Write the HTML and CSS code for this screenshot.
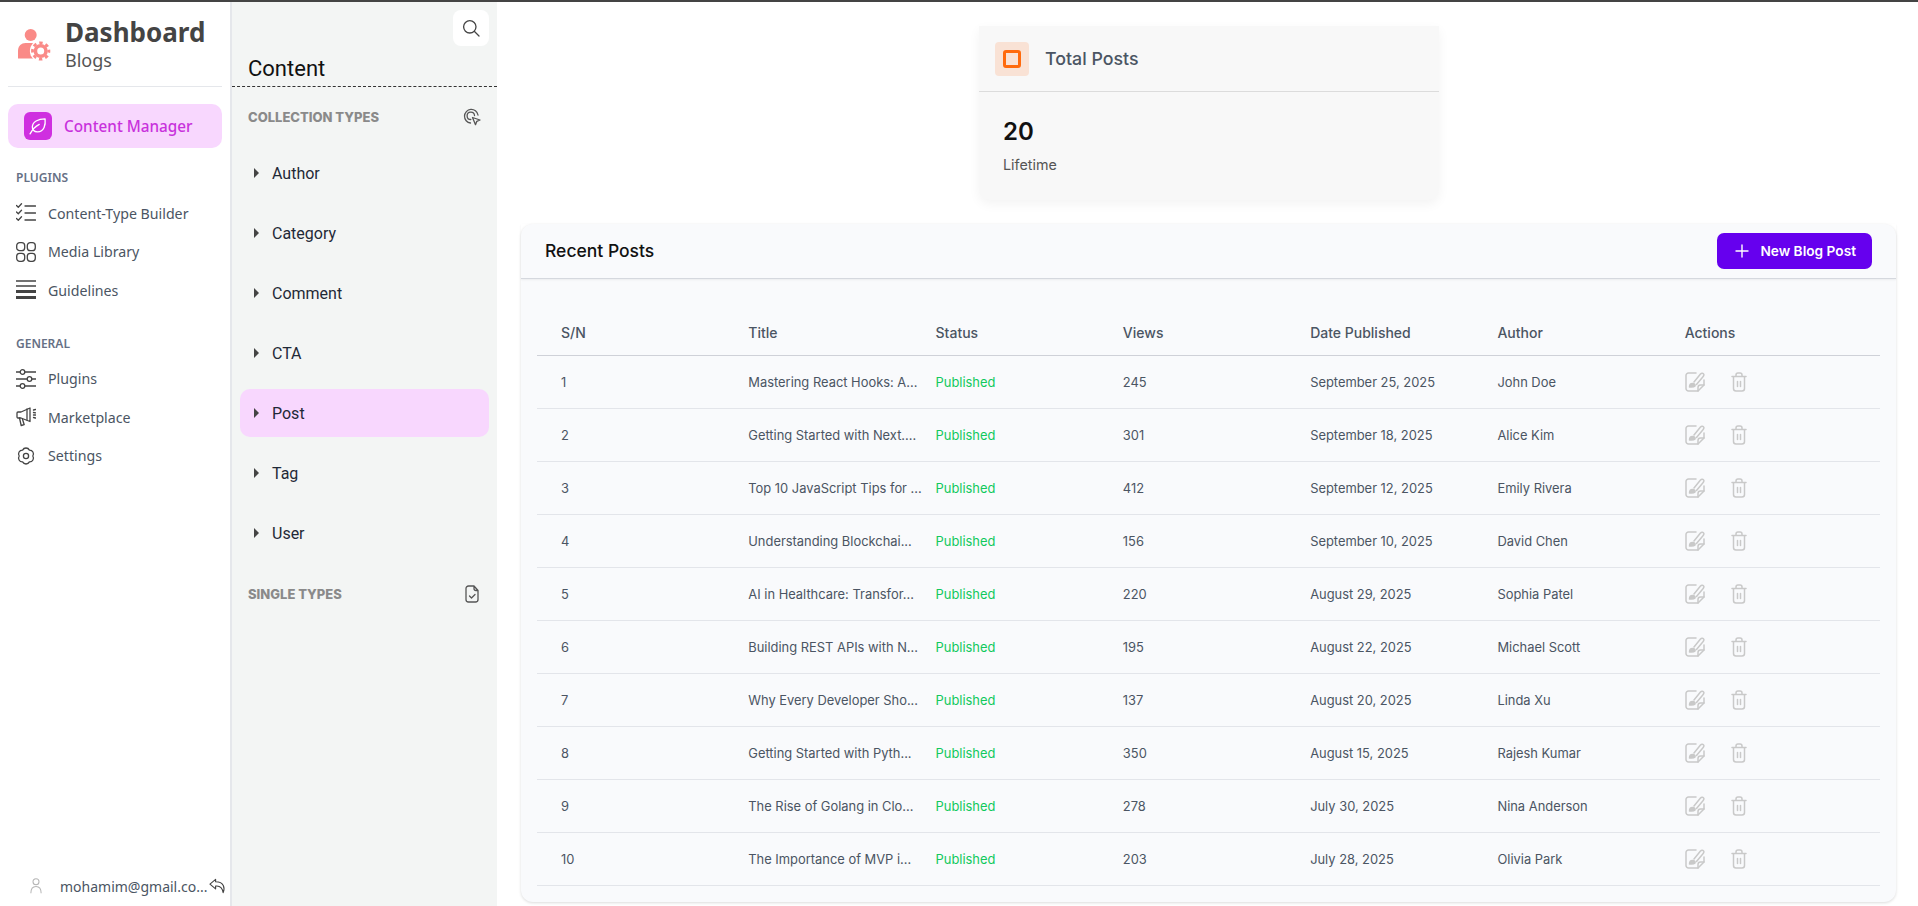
FILE: index.html
```html
<!DOCTYPE html>
<html lang="en">
<head>
    <meta charset="UTF-8">
    <meta name="viewport" content="width=device-width, initial-scale=1.0">
    <title>Dashboard Blogs</title>
    <link rel="stylesheet" href="styles.css">
</head>
<body>
    <div class="app">
        <!-- Main navigation -->
        <aside class="sidebar">
            <div class="brand">
                <svg class="brand-icon" viewBox="0 0 33 32" fill="#fa8a87">
                    <circle cx="12.700" cy="6" r="6"/>
                    <path d="M0 29.500v-8c0-4.500 3.500-7.500 7.500-7.500h10c3 0 5 1 6 3v12.500z"/>
                    <circle cx="22.700" cy="22" r="10.800" fill="#fff"/>
                    <circle cx="22.700" cy="22" r="5.300" fill="none" stroke="#fa8a87" stroke-width="3.600"/>
                    <circle cx="22.700" cy="22" r="8.200" fill="none" stroke="#fa8a87" stroke-width="2.800" stroke-dasharray="3.400 3.040" stroke-dashoffset="1.700"/>
                </svg>
                <div>
                    <div class="brand-title">Dashboard</div>
                    <div class="brand-sub">Blogs</div>
                </div>
            </div>

            <a class="manager-link">
                <span class="manager-icon">
                    <svg width="20" height="20" viewBox="0 0 24 24" fill="none" stroke="#fff" stroke-width="1.600" stroke-linecap="round" stroke-linejoin="round">
                        <path d="M20.500 3.500c.8 7-1 15-9 15.500-4 .2-6.500-2.500-6.300-6C5.500 7 12 3.500 20.500 3.500z"/>
                        <path d="M2.500 21.500c2.500-5 6-9 11-11.500"/>
                    </svg>
                </span>
                Content Manager
            </a>

            <div class="nav-label">PLUGINS</div>
            <a class="nav-item">
                <svg class="nav-icon" viewBox="0 0 20 20"><path d="M.5 2.500l1.800 1.800L5.500.8M.5 9l1.800 1.800L5.500 7.300M.5 15.500l1.800 1.800 3.200-3.500M9 3h10.500M9 10h10.500M9 17h10.500"/></svg>
                Content-Type Builder
            </a>
            <a class="nav-item">
                <svg class="nav-icon" viewBox="0 0 20 20"><rect x=".7" y=".7" width="8" height="8" rx="3"/><rect x="11.300" y=".7" width="8" height="8" rx="3"/><rect x=".7" y="11.300" width="8" height="8" rx="3"/><rect x="11.300" y="11.300" width="8" height="8" rx="3"/></svg>
                Media Library
            </a>
            <a class="nav-item">
                <svg class="nav-icon" viewBox="0 0 20 20"><path d="M0 1h20M0 6h20"/><path d="M0 11.500h20M0 17.500h20" stroke-width="3"/></svg>
                Guidelines
            </a>

            <div class="nav-label nav-label-general">GENERAL</div>
            <a class="nav-item">
                <svg class="nav-icon" viewBox="0 0 20 20"><path d="M0 3h4M9 3h11M0 10h11M16 10h4M0 17h4M9 17h11"/><circle cx="6.500" cy="3" r="2.300"/><circle cx="13.500" cy="10" r="2.300"/><circle cx="6.500" cy="17" r="2.300"/></svg>
                Plugins
            </a>
            <a class="nav-item">
                <svg class="nav-icon" viewBox="0 0 20 20"><path d="M14 1v13.500L5 11H1.800A1 1 0 0 1 1 10V6a1 1 0 0 1 1-1h3z"/><path d="M3.500 11l1.700 7.500 3-.8-1.700-5.500M11 2v11M17.500 3l2-.5M17.500 8h2M17.500 5.500l2 .3M17.500 10.500l2 .5"/></svg>
                Marketplace
            </a>
            <a class="nav-item">
                <svg class="nav-icon" viewBox="0 0 20 20"><path d="M13.400 4.100A3.800 3.800 0 0 1 16.800 10 3.800 3.800 0 0 1 13.400 15.900 3.800 3.800 0 0 1 6.600 15.900 3.800 3.800 0 0 1 3.200 10 3.800 3.800 0 0 1 6.600 4.100 3.800 3.800 0 0 1 13.400 4.100z"/><circle cx="10" cy="10" r="2.600"/></svg>
                Settings
            </a>

            <div class="user-row">
                <svg class="user-icon" viewBox="0 0 14 20"><circle cx="7" cy="4.500" r="3.500"/><path d="M1 18c0-5 2.500-8 6-8s6 3 6 8"/></svg>
                <span class="user-mail">mohamim@gmail.co...</span>
                <svg class="user-back" viewBox="0 0 18 18"><path d="M7 1.500L1 6.500l6 5V8.500c4-.5 7 1 8 7 2-5 1-11.500-8-11.500z"/></svg>
            </div>
        </aside>

        <!-- Content types -->
        <nav class="content-panel">
            <div class="search-row">
                <button class="search-btn">
                    <svg width="18" height="18" viewBox="0 0 18 18" fill="none" stroke="#444" stroke-width="1.300" stroke-linecap="round"><circle cx="7.800" cy="7.800" r="6.200"/><path d="M12.500 12.500l4.500 4.500"/></svg>
                </button>
            </div>
            <div class="panel-title">Content</div>

            <div class="type-head">
                <span>COLLECTION TYPES</span>
                <svg width="18" height="18" viewBox="0 0 18 18" fill="none" stroke="#555" stroke-width="1.300" stroke-linecap="round" stroke-linejoin="round"><path d="M7.500 15A6.800 6.800 0 1 1 15 7M7.800 11.500A3.700 3.700 0 1 1 11.500 7.500"/><path d="M9.500 9.500l7.500 2.500-3.200 1.300-1.300 3.400z"/></svg>
            </div>
            <ul class="type-list">
                <li class="type-item"><span class="caret"></span>Author</li>
                <li class="type-item"><span class="caret"></span>Category</li>
                <li class="type-item"><span class="caret"></span>Comment</li>
                <li class="type-item"><span class="caret"></span>CTA</li>
                <li class="type-item active"><span class="caret"></span>Post</li>
                <li class="type-item"><span class="caret"></span>Tag</li>
                <li class="type-item"><span class="caret"></span>User</li>
            </ul>
            <div class="type-head type-head-single">
                <span>SINGLE TYPES</span>
                <svg width="18" height="18" viewBox="0 0 18 18" fill="none" stroke="#555" stroke-width="1.300" stroke-linecap="round" stroke-linejoin="round"><path d="M3 3.500A2.500 2.500 0 0 1 5.500 1h5.500l4 4.500v9a2.500 2.500 0 0 1-2.500 2.500h-7A2.500 2.500 0 0 1 3 14.500zM11 1v2.500a2 2 0 0 0 2 2h2M6.500 11l2 2 3.500-3.500"/></svg>
            </div>
        </nav>

        <main class="main">
            <section class="stat-card">
                <div class="stat-head">
                    <span class="stat-icon"><span class="stat-square"></span></span>
                    Total Posts
                </div>
                <div class="stat-body">
                    <div class="stat-value">20</div>
                    <div class="stat-note">Lifetime</div>
                </div>
            </section>

            <section class="posts">
                <div class="posts-head">
                    <h2>Recent Posts</h2>
                    <button class="new-btn">
                        <svg width="14" height="14" viewBox="0 0 14 14" stroke="#fff" stroke-width="1.400" stroke-linecap="round"><path d="M7 1v12M1 7h12"/></svg>
                        New Blog Post
                    </button>
                </div>
                <div class="table" id="table">
                    <div class="row row-head">
                        <div>S/N</div><div>Title</div><div>Status</div><div>Views</div><div>Date Published</div><div>Author</div><div>Actions</div>
                    </div>
                </div>
            </section>
        </main>
    </div>

    <script>
        const posts = [
            ['Mastering React Hooks: A...', 245, 'September 25, 2025', 'John Doe'],
            ['Getting Started with Next....', 301, 'September 18, 2025', 'Alice Kim'],
            ['Top 10 JavaScript Tips for ...', 412, 'September 12, 2025', 'Emily Rivera'],
            ['Understanding Blockchai...', 156, 'September 10, 2025', 'David Chen'],
            ['AI in Healthcare: Transfor...', 220, 'August 29, 2025', 'Sophia Patel'],
            ['Building REST APIs with N...', 195, 'August 22, 2025', 'Michael Scott'],
            ['Why Every Developer Sho...', 137, 'August 20, 2025', 'Linda Xu'],
            ['Getting Started with Pyth...', 350, 'August 15, 2025', 'Rajesh Kumar'],
            ['The Rise of Golang in Clo...', 278, 'July 30, 2025', 'Nina Anderson'],
            ['The Importance of MVP i...', 203, 'July 28, 2025', 'Olivia Park']
        ];

        const editIcon = '<svg width="20" height="20" viewBox="0 0 20 20" fill="none" stroke="#c9c9c9" stroke-width="1.500" stroke-linecap="round" stroke-linejoin="round"><path d="M11 1H3.500A2.500 2.500 0 0 0 1 3.500v13A2.500 2.500 0 0 0 3.500 19H13l6-6V8"/><path d="M13 19v-3.500a2.500 2.500 0 0 1 2.500-2.500H19"/><path d="M9 10l6.500-8c1-1 2.800-.8 3.300.3.400 1-.2 1.700-.8 2.400L11.500 12.500"/><path d="M4.500 15c0-2 1-3.500 3-3.500s3 1.300 2.500 2.500c-1 1.200-3.500 1.200-5.500 1z" fill="#c9c9c9"/></svg>';
        const trashIcon = '<svg width="16" height="20" viewBox="0 0 16 20" fill="none" stroke="#c9c9c9" stroke-width="1.500" stroke-linecap="round" stroke-linejoin="round"><path d="M1 4.500h14M5 4.500V3a2 2 0 0 1 2-2h2a2 2 0 0 1 2 2v1.500M2.500 4.500v12A2.500 2.500 0 0 0 5 19h6a2.500 2.500 0 0 0 2.500-2.500v-12M6.500 9.500v5M9.500 9.500v5"/></svg>';

        const table = document.getElementById('table');
        posts.forEach(function (post, i) {
            const row = document.createElement('div');
            row.className = 'row';
            row.innerHTML =
                `<div>${i + 1}</div>` +
                `<div>${post[0]}</div>` +
                `<div class="cell-status">Published</div>` +
                `<div>${post[1]}</div>` +
                `<div>${post[2]}</div>` +
                `<div>${post[3]}</div>` +
                `<div class="cell-actions">${editIcon}${trashIcon}</div>`;
            table.appendChild(row);
        });
    </script>
</body>
</html>
```

FILE: styles.css
```css
* {
    box-sizing: border-box;
}

html, body {
    margin: 0;
    height: 100%;
    overflow: hidden;
}

body {
    font-family: 'Noto Sans', sans-serif;
    background-color: #ffffff;
    color: #444;
}

.app {
    display: flex;
    height: 906px;
    border-top: 2px solid #444;
}

/* Sidebar */
.sidebar {
    width: 232px;
    flex-shrink: 0;
    display: flex;
    flex-direction: column;
    padding: 0 8px;
    border-right: 2px solid #e5e7eb;
    position: relative;
}

.brand {
    display: flex;
    align-items: center;
    gap: 14px;
    height: 85px;
    padding: 0 0 2px 10px;
    border-bottom: 1px solid #e5e7eb;
}

.brand-icon {
    width: 33px;
    height: 32px;
    flex-shrink: 0;
    margin-top: 3px;
}

.brand-title {
    font-size: 26px;
    font-weight: 700;
    line-height: 34px;
    color: #444;
}

.brand-sub {
    font-size: 18px;
    line-height: 22px;
    color: #555;
}

.manager-link {
    display: flex;
    align-items: center;
    gap: 12px;
    height: 44px;
    margin-top: 17px;
    padding-left: 16px;
    border-radius: 10px;
    background-color: #f8d7fe;
    color: #c832dc;
    font-size: 15.300px;
    font-weight: 500;
}

.manager-icon {
    width: 28px;
    height: 28px;
    display: flex;
    align-items: center;
    justify-content: center;
    border-radius: 6px;
    background-color: #cf2fe0;
}

.nav-label {
    margin: 22px 0 0 8px;
    height: 16px;
    line-height: 16px;
    font-size: 12px;
    font-weight: 600;
    color: #667085;
}

.nav-label-general {
    margin-top: 26px;
}

.nav-item {
    display: flex;
    align-items: center;
    gap: 12px;
    height: 38.500px;
    padding-left: 8px;
    font-size: 14.200px;
    color: #4b5563;
}

.nav-label + .nav-item {
    margin-top: 8px;
}

.nav-label-general + .nav-item {
    margin-top: 8px;
}

.nav-icon {
    width: 20px;
    height: 20px;
    flex-shrink: 0;
    fill: none;
    stroke: #444;
    stroke-width: 1.300;
    stroke-linecap: round;
    stroke-linejoin: round;
}

.user-row {
    position: absolute;
    left: 30px;
    right: 4px;
    bottom: 10px;
    display: flex;
    align-items: center;
    gap: 18px;
    font-size: 14px;
    color: #4b5563;
}

.user-icon {
    width: 12px;
    height: 19px;
    flex-shrink: 0;
    fill: none;
    stroke: #b5b5b5;
    stroke-width: 1.200;
}

.user-mail {
    flex: 1;
    white-space: nowrap;
}

.user-back {
    width: 17px;
    height: 17px;
    flex-shrink: 0;
    margin-left: -16px;
    fill: none;
    stroke: #444;
    stroke-width: 1.200;
    stroke-linejoin: round;
}

/* Content panel */
.content-panel {
    width: 265px;
    flex-shrink: 0;
    padding: 0 8px;
    background-color: #f3f5f4;
}

.search-row {
    display: flex;
    justify-content: flex-end;
    padding-top: 8px;
}

.search-btn {
    width: 36px;
    height: 36px;
    display: flex;
    align-items: center;
    justify-content: center;
    padding: 0;
    border: none;
    border-radius: 8px;
    background-color: #ffffff;
}

.panel-title {
    height: 41px;
    margin: 0 -8px;
    padding: 10px 0 0 16px;
    border-bottom: 1px dashed #333;
    font-family: 'Roboto', sans-serif;
    font-size: 22px;
    line-height: 26px;
    color: #111;
}

.type-head {
    display: flex;
    align-items: center;
    justify-content: space-between;
    height: 20px;
    margin: 20px 8px 0;
    font-family: 'Inter', sans-serif;
    font-size: 13px;
    font-weight: 800;
    color: #8a8a8a;
}

.type-head-single {
    margin-top: 27px;
}

.type-list {
    list-style: none;
    margin: 22px 0 0;
    padding: 0;
}

.type-item {
    display: flex;
    align-items: center;
    height: 48px;
    margin-bottom: 12px;
    padding-left: 14px;
    border-radius: 10px;
    font-family: 'Roboto', sans-serif;
    font-size: 16px;
    color: #1f2937;
}

.type-item.active {
    background-color: #f8d7fe;
}

.caret {
    width: 0;
    height: 0;
    margin-right: 13px;
    border-top: 5px solid transparent;
    border-bottom: 5px solid transparent;
    border-left: 5px solid #444;
}

/* Main area */
.main {
    flex: 1;
    min-width: 0;
    padding: 24px 22px 0 24px;
    font-family: 'Inter', sans-serif;
}

.stat-card {
    width: 460px;
    height: 174px;
    margin: 0 0 24px 458px;
    border-radius: 0 0 10px 10px;
    background-color: #f8f8f8;
    box-shadow: 0 4px 12px rgba(0, 0, 0, 0.05);
}

.stat-head {
    display: flex;
    align-items: center;
    gap: 16px;
    height: 66px;
    padding-left: 16px;
    border-bottom: 1px solid #dcdcdc;
    font-size: 17.800px;
    font-weight: 500;
    color: #4b5563;
}

.stat-icon {
    width: 34px;
    height: 34px;
    display: flex;
    align-items: center;
    justify-content: center;
    border-radius: 4px;
    background-color: #f9e2d5;
}

.stat-square {
    width: 18px;
    height: 18px;
    border: 3px solid #ff6a0d;
    border-radius: 3px;
}

.stat-body {
    padding: 25px 24px;
}

.stat-value {
    font-size: 24px;
    font-weight: 600;
    line-height: 30px;
    color: #111;
}

.stat-note {
    margin-top: 10px;
    font-size: 14.300px;
    line-height: 16px;
    color: #555;
}

/* Recent posts */
.posts {
    height: 678px;
    border-radius: 12px;
    background-color: #f9fafc;
    box-shadow: 0 1px 3px rgba(0, 0, 0, 0.14);
}

.posts-head {
    display: flex;
    align-items: center;
    justify-content: space-between;
    height: 55px;
    padding: 0 24px;
    border-bottom: 1px solid #d5d8de;
    box-shadow: 0 1px 2px rgba(0, 0, 0, 0.06);
}

.posts-head h2 {
    margin: 0 0 2px;
    font-size: 17.500px;
    font-weight: 500;
    color: #111;
}

.new-btn {
    display: flex;
    align-items: center;
    gap: 11px;
    height: 36px;
    padding: 0 16px 0 18px;
    border: none;
    border-radius: 7px;
    background-color: #6600ee;
    color: #fff;
    font-family: 'Inter', sans-serif;
    font-size: 13.700px;
    font-weight: 600;
}

.table {
    margin: 0 16px;
    padding-top: 33px;
}

.row {
    display: grid;
    grid-template-columns: repeat(7, 1fr);
    align-items: center;
    height: 53px;
    padding: 0 8px 0 24px;
    border-bottom: 1px solid #e3e5ea;
    font-size: 12.900px;
    color: #4b5563;
}

.row > div {
    white-space: nowrap;
}

.row-head {
    height: 44px;
    padding-bottom: 2px;
    border-bottom-color: #cfd1d8;
    font-size: 14px;
    font-weight: 500;
}

.cell-status {
    color: #12c95d;
}

.cell-actions {
    display: flex;
    align-items: center;
    gap: 26px;
}
```
